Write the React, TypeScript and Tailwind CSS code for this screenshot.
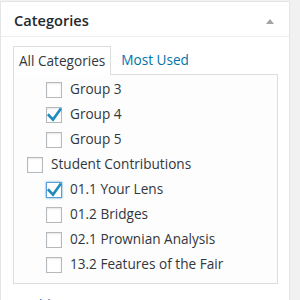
import { FC } from "react";

type Cat = { name: string; level: number; checked?: boolean; focused?: boolean };

const cats: Cat[] = [
  { name: "Group 3", level: 1 },
  { name: "Group 4", level: 1, checked: true },
  { name: "Group 5", level: 1 },
  { name: "Student Contributions", level: 0 },
  { name: "01.1 Your Lens", level: 1, checked: true, focused: true },
  { name: "01.2 Bridges", level: 1 },
  { name: "02.1 Prownian Analysis", level: 1 },
  { name: "13.2 Features of the Fair", level: 1 },
];

const Checkbox: FC<{ checked?: boolean; focused?: boolean }> = ({ checked, focused }) => (
  <span
    className={
      focused
        ? "relative flex h-[16px] w-[16px] shrink-0 items-center justify-center border border-[#5b9dd9] bg-white shadow-[0_0_2px_rgba(30,140,190,0.8)]"
        : "relative flex h-[16px] w-[16px] shrink-0 items-center justify-center border border-[#b4b9be] bg-white shadow-[inset_0_1px_2px_rgba(0,0,0,0.1)]"
    }
  >
    {checked && (
      <svg width="16" height="16" viewBox="0 0 16 16" className="absolute left-[-1px] top-[-1px]">
        <path
          d="M2.8 8.2 L7 12.6 L14.2 2.6"
          fill="none"
          stroke="#1e8cbe"
          strokeWidth="2.6"
          strokeLinecap="square"
        />
      </svg>
    )}
  </span>
);

const App: FC = () => {
  return (
    <div
      className="h-[300px] w-[300px] overflow-hidden bg-[#f1f1f1] pt-px"
      style={{ fontFamily: '"Open Sans", "Liberation Sans", sans-serif' }}
    >
      <div className="w-[290px] border border-[#e5e5e5] bg-white shadow-[0_1px_1px_rgba(0,0,0,0.04)]">
        <div className="flex h-[35px] items-center justify-between border-b border-[#eeeeee] pl-[13px] pr-[13px] pt-[4px]">
          <span className="text-[14.6px] font-semibold text-[#23282d]">Categories</span>
          <svg width="10" height="6" viewBox="0 0 10 6" className="mr-[1px]">
            <path d="M1 6 L5 1 L9 6 Z" fill="#a0a5aa" />
          </svg>
        </div>
        <div className="px-[12px] pt-[9px]">
          <div className="flex items-end text-[13.6px] leading-[20px]">
            <div className="relative z-10 -mb-px border border-b-0 border-[#dddddd] bg-white px-[5px] pb-[4px] pt-[4px] text-[#32373c]">
              All Categories
            </div>
            <div className="ml-[10px] pb-[4px] pt-[4px] text-[#0073aa]">Most Used</div>
          </div>
          <div className="w-[265px] border border-[#dddddd] bg-[#fdfdfd] pb-[6px] pt-[2px] text-[13.6px] text-[#32373c]">
            {cats.map((c) => (
              <div
                key={c.name}
                className={
                  c.level === 1
                    ? "flex h-[25px] items-center gap-[8px] pl-[32px]"
                    : "flex h-[25px] items-center gap-[8px] pl-[13px]"
                }
              >
                <Checkbox checked={c.checked} focused={c.focused} />
                <span>{c.name}</span>
              </div>
            ))}
          </div>
          <div className="mt-[11px] pl-[1px] text-[13.6px] leading-[20px] text-[#0073aa]">
            + Add New Category
          </div>
        </div>
      </div>
    </div>
  );
};

export default App;
